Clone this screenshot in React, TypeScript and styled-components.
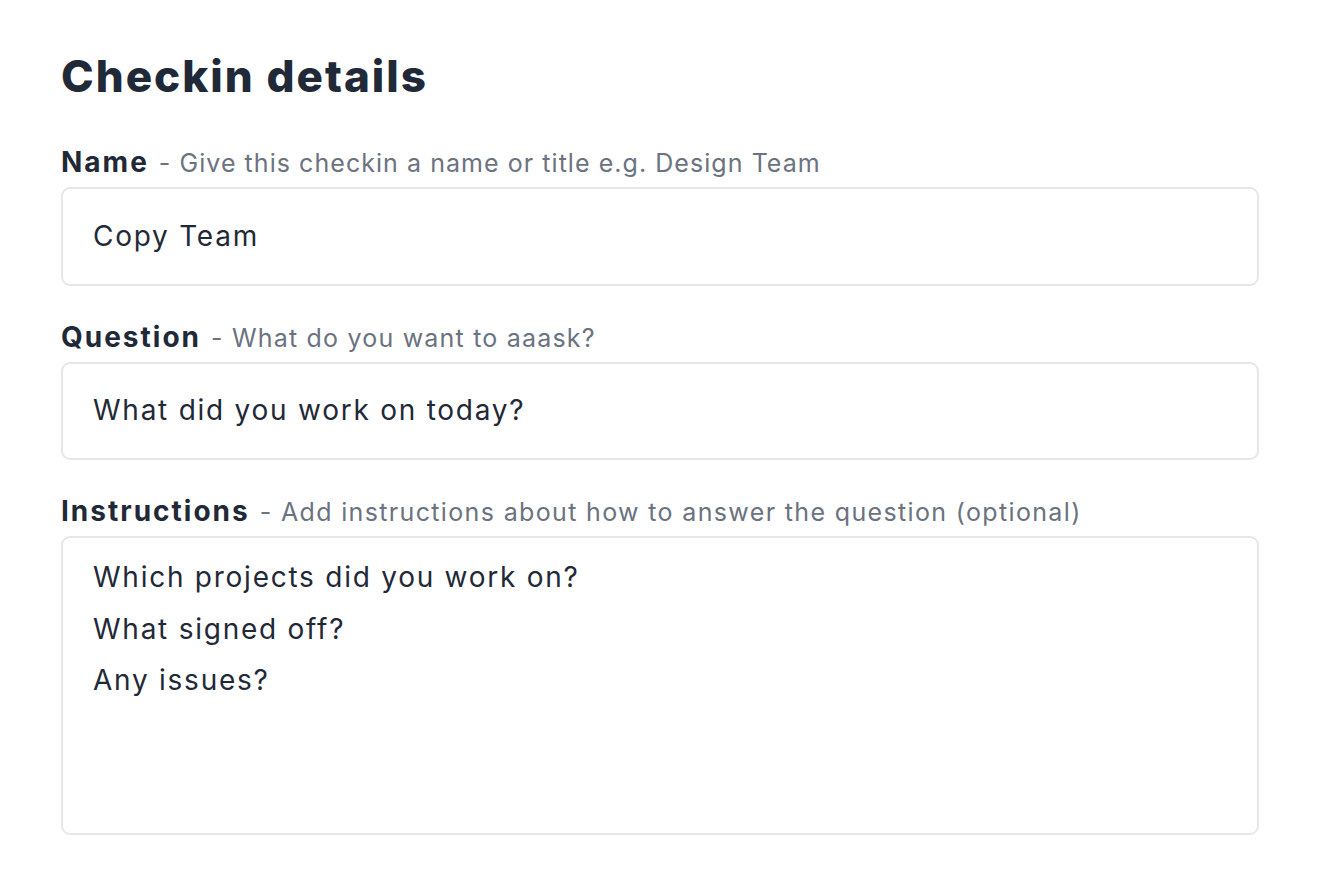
import React from "react";
import styled, { createGlobalStyle } from "styled-components";

const Global = createGlobalStyle`
  html, body { margin: 0; padding: 0; background: #ffffff; }
  body { font-family: Inter, "Noto Sans", sans-serif; color: #1f2937; }
  * { box-sizing: border-box; }
`;

const Page = styled.div`
  padding: 46px 65px 0 61px;
  width: 1324px;
`;

const Title = styled.h1`
  margin: 0 0 38px 0;
  font-size: 44px;
  line-height: 60px;
  font-weight: 800;
  color: #1f2937;
  letter-spacing: 2px;
`;

const Field = styled.div`
  display: flex;
  flex-direction: column;
  margin-bottom: 33px;
`;

const LabelRow = styled.div`
  display: flex;
  align-items: baseline;
  gap: 10px;
  height: 36px;
  line-height: 36px;
  margin-bottom: 7px;
`;

const LabelText = styled.label`
  font-size: 28px;
  font-weight: 700;
  letter-spacing: 2px;
  color: #1f2937;
`;

const Hint = styled.span<{ $spacing?: number }>`
  font-size: 25px;
  font-weight: 400;
  letter-spacing: ${(p) => p.$spacing ?? 1.2}px;
  color: #6b7280;
`;

const Box = styled.div<{ $tall?: boolean }>`
  border: 2px solid #e5e7eb;
  border-radius: 9px;
  height: ${(p) => (p.$tall ? "299px" : "98.5px")};
  padding: ${(p) => (p.$tall ? "14px 30px" : "0 30px")};
  display: flex;
  flex-direction: column;
  justify-content: ${(p) => (p.$tall ? "flex-start" : "center")};
  font-size: 28px;
  line-height: 51.5px;
  letter-spacing: 1.75px;
  color: #1f2937;
`;

const Line = styled.div``;

export default function App() {
  return (
    <>
      <Global />
      <Page>
        <Title>Checkin details</Title>
        <Field>
          <LabelRow>
            <LabelText>Name</LabelText>
            <Hint $spacing={1.05}>- Give this checkin a name or title e.g. Design Team</Hint>
          </LabelRow>
          <Box>Copy Team</Box>
        </Field>
        <Field>
          <LabelRow>
            <LabelText>Question</LabelText>
            <Hint>- What do you want to aaask?</Hint>
          </LabelRow>
          <Box>What did you work on today?</Box>
        </Field>
        <Field>
          <LabelRow>
            <LabelText>Instructions</LabelText>
            <Hint $spacing={1.35}>- Add instructions about how to answer the question (optional)</Hint>
          </LabelRow>
          <Box $tall>
            <Line>Which projects did you work on?</Line>
            <Line>What signed off?</Line>
            <Line>Any issues?</Line>
          </Box>
        </Field>
      </Page>
    </>
  );
}
